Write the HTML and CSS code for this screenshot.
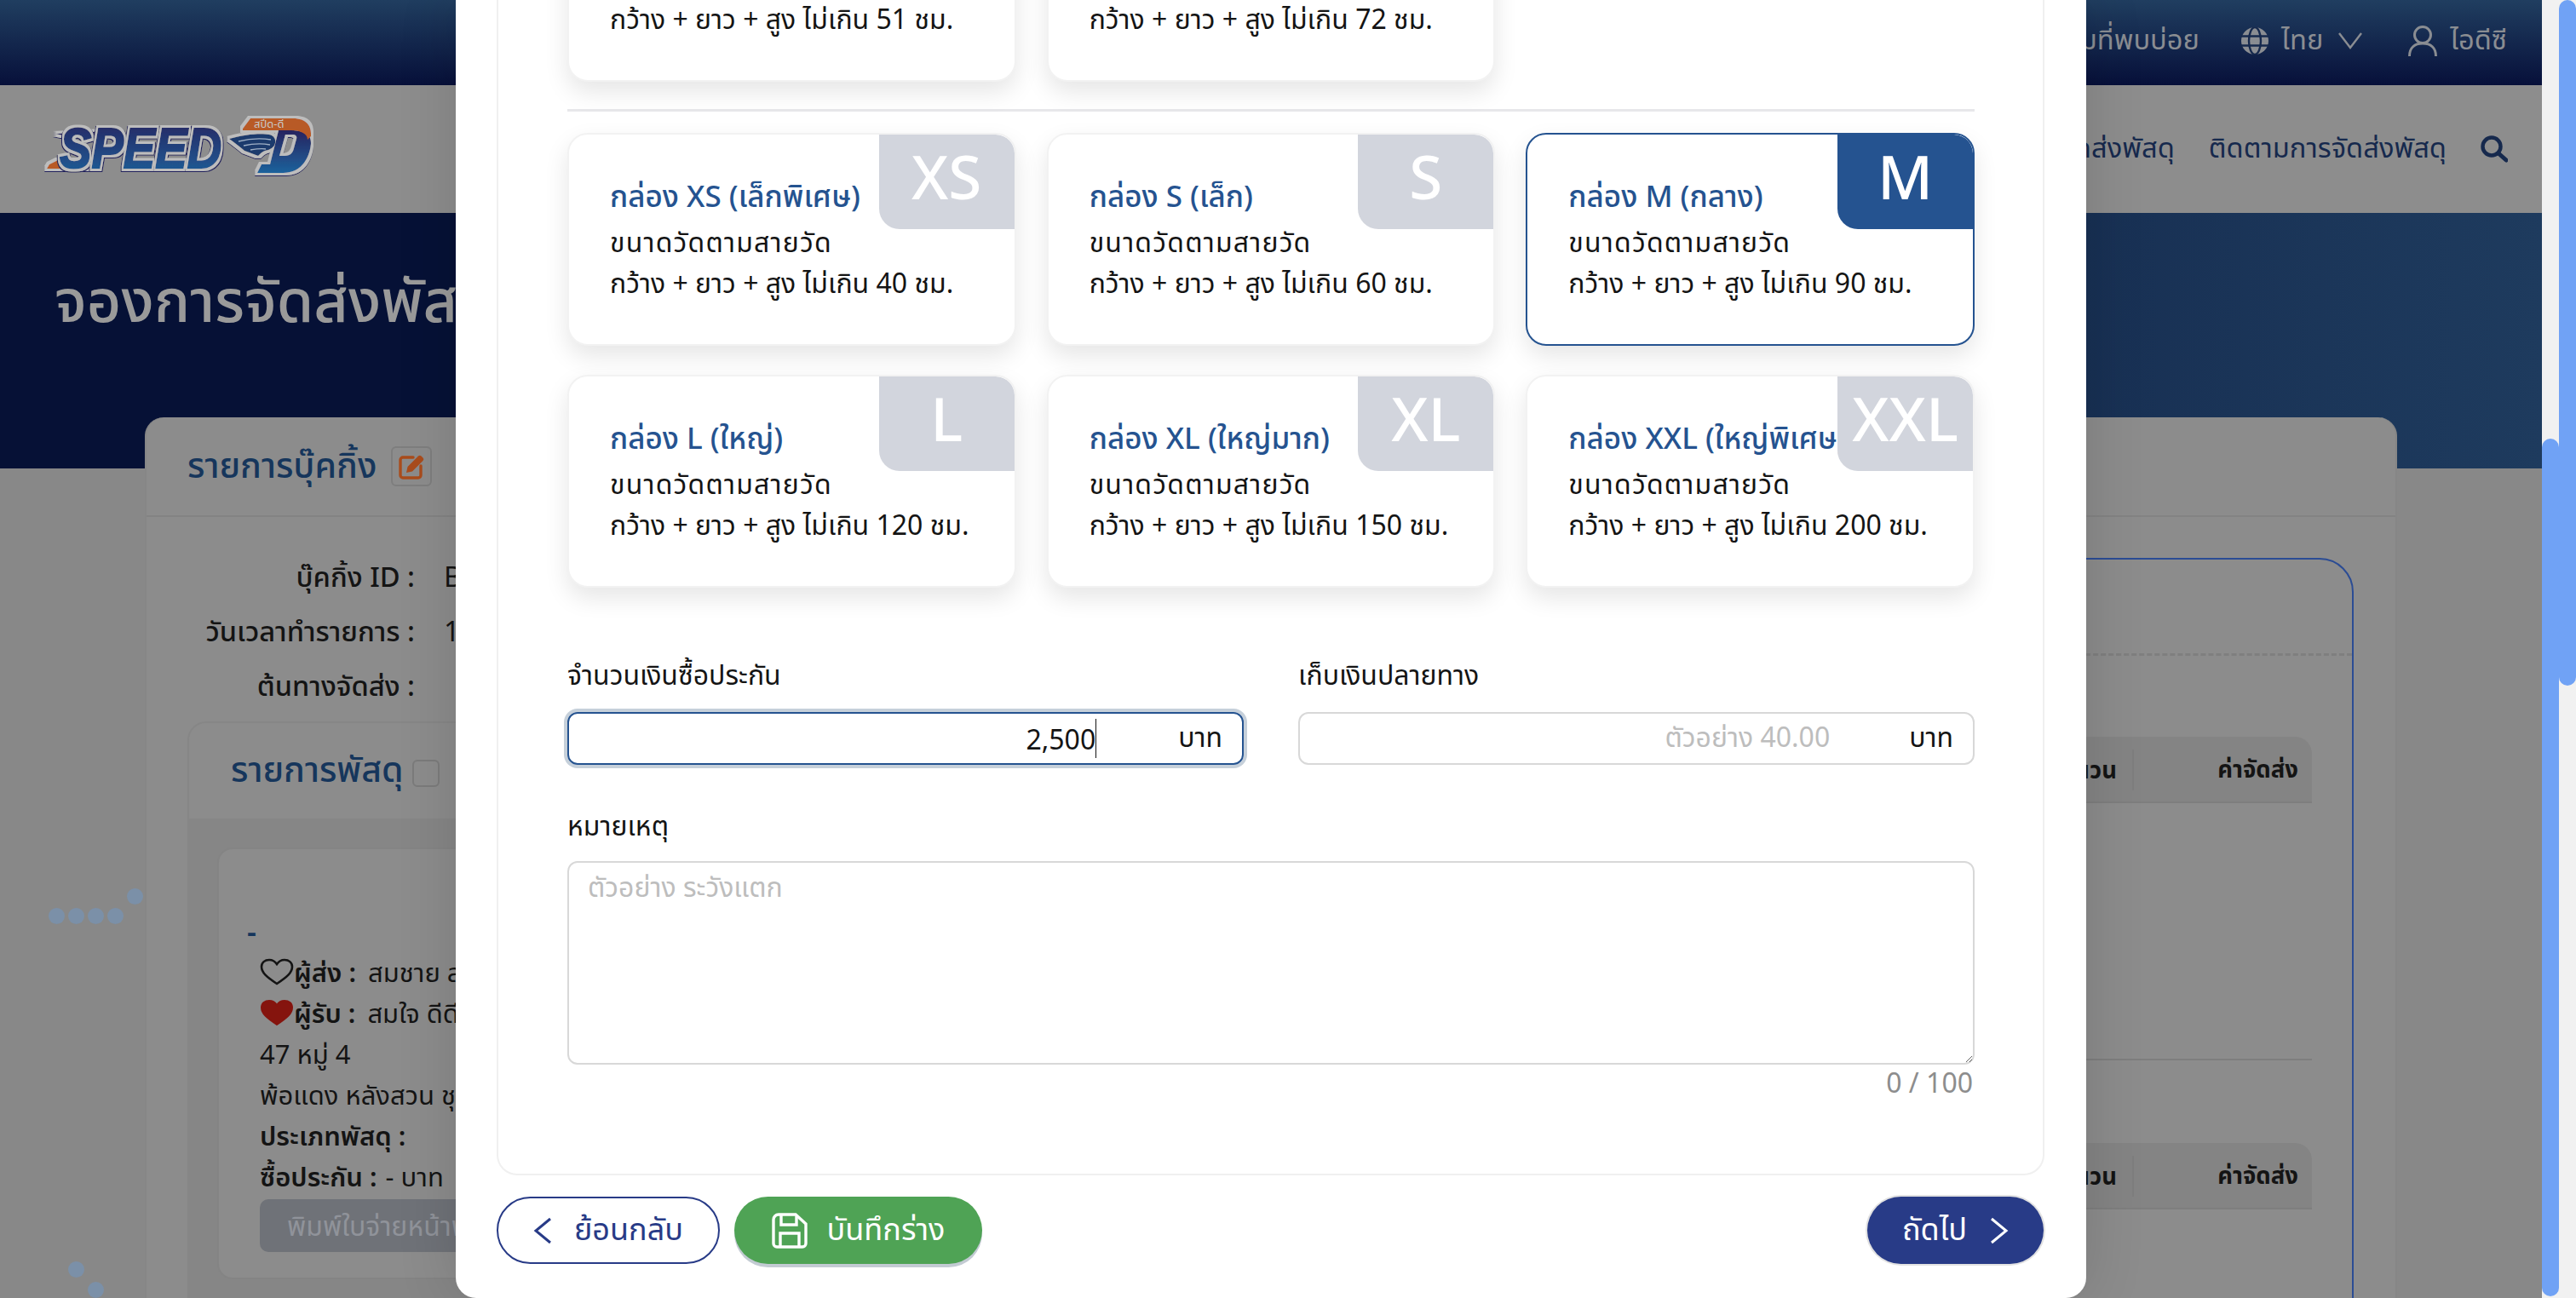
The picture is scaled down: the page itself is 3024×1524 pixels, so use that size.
FILE: index.html
```html
<!DOCTYPE html>
<html lang="th">
<head>
<meta charset="utf-8">
<title>จองการจัดส่งพัสดุ</title>
<link rel="stylesheet" href="styles.css">
</head>
<body>
<div class="viewport">
  <div class="page">
    <header class="topbar">
      <span class="top-link">คำถามที่พบบ่อย</span>
      <span class="top-item">
        <svg class="ic-globe" viewBox="0 0 32 32"><circle cx="16" cy="16" r="16" fill="#8a8d92"/><g stroke="#16294d" stroke-width="2.4" fill="none"><ellipse cx="16" cy="16" rx="7" ry="16"/><path d="M0 10.5h32M0 21.5h32"/></g></svg>
        <span>ไทย</span>
        <svg class="ic-chev" viewBox="0 0 28 20"><path d="M1 1l13 17L27 1" fill="none" stroke="#8a8d92" stroke-width="2.4"/></svg>
      </span>
      <span class="top-item user">
        <svg class="ic-user" viewBox="0 0 34 36"><circle cx="17" cy="11" r="9.5" fill="none" stroke="#8a8d92" stroke-width="3"/><path d="M1.5 36c0-10 6-15 15.500-15s15.500 5 15.500 15" fill="none" stroke="#8a8d92" stroke-width="3"/></svg>
        <span>ไอดีซี</span>
      </span>
    </header>

    <nav class="navbar">
      <svg class="logo" viewBox="0 0 320 80" aria-label="Speed D">
        <defs>
          <linearGradient id="lg" x1="0" y1="0" x2="0" y2="1"><stop offset="0" stop-color="#27235f"/><stop offset="1" stop-color="#1d629c"/></linearGradient>
          <filter id="outline" x="-10%" y="-20%" width="120%" height="140%">
            <feMorphology in="SourceAlpha" operator="dilate" radius="3.2" result="fat"/>
            <feOffset in="fat" dy="1" result="fatLow"/>
            <feFlood flood-color="#22225c"/><feComposite in2="fatLow" operator="in" result="dark"/>
            <feMorphology in="SourceAlpha" operator="dilate" radius="2.6" result="mid"/>
            <feFlood flood-color="#bdbdbd"/><feComposite in2="mid" operator="in" result="light"/>
            <feMerge><feMergeNode in="dark"/><feMergeNode in="light"/><feMergeNode in="SourceGraphic"/></feMerge>
          </filter>
        </defs>
        <g filter="url(#outline)">
          <path d="M10 57l10-5h35c6 0 9-3 10-6l-4 12c-2 3-5 4-9 4H7z" fill="#b85a28"/>
          <path d="M17 21l60-3-2 5H26z" fill="#27235f"/>
          <path d="M271 17h23c15 0 24 5 23 16-2 20-14 34-32 34h-31l5-10h10l10-40zm16 5l-7 25h6c7 0 10-4 11-9l3-11c1-3-1-5-5-5z" fill="url(#lg)" fill-rule="evenodd"/>
          <path d="M237 15l9-12h50c16 0 22 9 21 21l-4 4c0-7-8-11-19-11h-57z" fill="#b85a28"/>
          <path d="M221 27c18-5 36-7 47-5 6 1 8 6 7 10-1 5-6 8-12 9-3 1-5 3-8 6l-16-6c-6-5-12-10-18-14z" fill="#1e3a6d"/>
        </g>
        <path d="M232 30c12-3 26-4 38-2M238 35c9-2 20-3 31-1M246 40c6-1 13-2 18-1" stroke="#9fb0c6" stroke-width="1.3" fill="none"/>
        <text class="logo-word" transform="translate(22 61) scale(.85 1)">SPEED</text>
        <text class="logo-thai" x="250" y="14">สปีด-ดี</text>
      </svg>
      <span class="nav-links">
        <span>จองการจัดส่งพัสดุ</span>
        <span>ติดตามการจัดส่งพัสดุ</span>
        <svg class="ic-search" viewBox="0 0 32 32"><circle cx="13" cy="13" r="10.500" fill="none" stroke="#16294d" stroke-width="4.400"/><path d="M21 21l9 8" stroke="#16294d" stroke-width="5" stroke-linecap="round"/></svg>
      </span>
    </nav>

    <section class="hero"><h1>จองการจัดส่งพัสดุ</h1></section>

    <main class="booking">
      <div class="booking-head">
        <h2>รายการบุ๊คกิ้ง</h2>
        <span class="edit-box">
          <svg viewBox="0 0 32 32"><path d="M18 5H6a3 3 0 0 0-3 3v18a3 3 0 0 0 3 3h18a3 3 0 0 0 3-3V15" fill="none" stroke="#a94c1c" stroke-width="3.400" stroke-linecap="round"/><path d="M10 23l1.500-7L24 3.500a2.500 2.500 0 0 1 3.500 0l2 2a2.500 2.500 0 0 1 0 3.500L17 21.500z" fill="#a94c1c"/></svg>
        </span>
      </div>
      <div class="booking-body">
        <div class="booking-left">
          <dl class="meta">
            <dt>บุ๊คกิ้ง ID :</dt><dd>BK6701000123</dd>
            <dt>วันเวลาทำรายการ :</dt><dd>12/01/2567 10:30</dd>
            <dt>ต้นทางจัดส่ง :</dt><dd></dd>
          </dl>
          <section class="parcels">
            <div class="parcels-head"><h3>รายการพัสดุ</h3><span class="check-box"></span></div>
            <div class="parcels-body">
              <article class="parcel">
                <div class="parcel-dash">-</div>
                <div class="parcel-line who">
                  <svg class="heart" viewBox="0 0 40 32"><path d="M20 30C8 22 2 17 2 10 2 5 6 2 11 2c4 0 7 2 9 5 2-3 5-5 9-5 5 0 9 3 9 8 0 7-6 12-18 20z" fill="none" stroke="#141414" stroke-width="2.600"/></svg>
                  <b>ผู้ส่ง :</b><span>สมชาย สมบูรณ์</span>
                </div>
                <div class="parcel-line who">
                  <svg class="heart" viewBox="0 0 40 32"><path d="M20 30C8 22 2 17 2 10 2 5 6 2 11 2c4 0 7 2 9 5 2-3 5-5 9-5 5 0 9 3 9 8 0 7-6 12-18 20z" fill="#85140e" stroke="#85140e" stroke-width="2"/></svg>
                  <b>ผู้รับ :</b><span>สมใจ ดีดี</span>
                </div>
                <div class="parcel-line">47 หมู่ 4</div>
                <div class="parcel-line">พ้อแดง หลังสวน ชุมพร</div>
                <div class="parcel-line"><b>ประเภทพัสดุ :</b></div>
                <div class="parcel-line"><b>ซื้อประกัน :</b> - บาท</div>
                <div class="print-btn">พิมพ์ใบจ่ายหน้าพัสดุ</div>
              </article>
            </div>
          </section>
        </div>
        <aside class="summary">
          <div class="summary-head"></div>
          <div class="table-head"><span class="th-qty">จำนวน</span><span class="th-fee">ค่าจัดส่ง</span></div>
          <div class="table-row"></div>
          <div class="table-head second"><span class="th-qty">จำนวน</span><span class="th-fee">ค่าจัดส่ง</span></div>
        </aside>
      </div>
    </main>

    <div class="dots">
      <i class="d1"></i><i class="d2"></i><i class="d3"></i><i class="d4"></i><i class="d5"></i><i class="d6"></i><i class="d7"></i>
    </div>

    <div class="modal">
      <div class="modal-panel">
        <div class="size-grid first">
          <div class="box"><p class="box-line">กว้าง + ยาว + สูง ไม่เกิน 51 ชม.</p></div>
          <div class="box"><p class="box-line">กว้าง + ยาว + สูง ไม่เกิน 72 ชม.</p></div>
        </div>
        <hr class="divider">
        <div class="size-grid">
          <div class="box"><span class="badge">XS</span><h4>กล่อง XS (เล็กพิเศษ)</h4><p>ขนาดวัดตามสายวัด</p><p>กว้าง + ยาว + สูง ไม่เกิน 40 ชม.</p></div>
          <div class="box"><span class="badge">S</span><h4>กล่อง S (เล็ก)</h4><p>ขนาดวัดตามสายวัด</p><p>กว้าง + ยาว + สูง ไม่เกิน 60 ชม.</p></div>
          <div class="box selected"><span class="badge">M</span><h4>กล่อง M (กลาง)</h4><p>ขนาดวัดตามสายวัด</p><p>กว้าง + ยาว + สูง ไม่เกิน 90 ชม.</p></div>
          <div class="box"><span class="badge">L</span><h4>กล่อง L (ใหญ่)</h4><p>ขนาดวัดตามสายวัด</p><p>กว้าง + ยาว + สูง ไม่เกิน 120 ชม.</p></div>
          <div class="box"><span class="badge">XL</span><h4>กล่อง XL (ใหญ่มาก)</h4><p>ขนาดวัดตามสายวัด</p><p>กว้าง + ยาว + สูง ไม่เกิน 150 ชม.</p></div>
          <div class="box"><span class="badge">XXL</span><h4>กล่อง XXL (ใหญ่พิเศษ)</h4><p>ขนาดวัดตามสายวัด</p><p>กว้าง + ยาว + สูง ไม่เกิน 200 ชม.</p></div>
        </div>
        <div class="fields">
          <div class="field">
            <label>จำนวนเงินซื้อประกัน</label>
            <div class="input focused"><span class="val">2,500</span><span class="caret"></span><span class="unit">บาท</span></div>
          </div>
          <div class="field">
            <label>เก็บเงินปลายทาง</label>
            <div class="input"><span class="ph">ตัวอย่าง 40.00</span><span class="unit">บาท</span></div>
          </div>
        </div>
        <div class="note">
          <label>หมายเหตุ</label>
          <textarea placeholder="ตัวอย่าง ระวังแตก"></textarea>
          <div class="count">0 / 100</div>
        </div>
      </div>
      <footer class="modal-foot">
        <div class="foot-left">
          <button class="btn back"><svg class="chev" viewBox="0 0 22 32"><path d="M20 2L3 16l17 14" fill="none" stroke="currentColor" stroke-width="3"/></svg>ย้อนกลับ</button>
          <button class="btn save"><svg class="floppy" viewBox="0 0 42 42"><path d="M8 2h20l12 11v23a4 4 0 0 1-4 4H6a4 4 0 0 1-4-4V8a6 6 0 0 1 6-6z" fill="none" stroke="#fff" stroke-width="3.400"/><path d="M11 2v12h18V4M10 40V24h22v16" fill="none" stroke="#fff" stroke-width="3.400"/></svg>บันทึกร่าง</button>
        </div>
        <button class="btn next">ถัดไป<svg class="chev" viewBox="0 0 22 32"><path d="M2 2l17 14L2 30" fill="none" stroke="currentColor" stroke-width="3"/></svg></button>
      </footer>
    </div>
  </div>
  <div class="bar bar-inner"><span class="thumb"></span></div>
  <div class="bar bar-outer"><span class="thumb"></span></div>
</div>
</body>
</html>
```
FILE: styles.css
```css
* { box-sizing: border-box; }
html, body { margin: 0; height: 100%; overflow: hidden; }
body { font-family: "Noto Sans", "Noto Sans Thai", "Noto Sans CJK SC", sans-serif; color: #141414; background: #f1f1f1; }
h1, h2, h3, h4, p, dl, dd, dt { margin: 0; font-weight: inherit; }

.viewport { display: flex; width: 3024px; height: 1524px; }
.page { position: relative; width: 2984px; height: 1524px; overflow: hidden; background: #888; }

/* scrollbars */
.bar { position: relative; width: 20px; background: #f1f1f1; }
.thumb { position: absolute; left: 0; width: 20px; background: #70a2f5; border-radius: 10px; }
.bar-inner .thumb { top: 515px; bottom: 2px; }
.bar-outer .thumb { top: 0; height: 805px; }

/* top bar */
.topbar { height: 100px; display: flex; align-items: center; justify-content: flex-end; padding: 0 41px 4px 0; gap: 49px; font-size: 32.7px; color: #8a8d92; background: linear-gradient(#203e60, #07103a); }
.top-item { display: flex; align-items: center; gap: 15px; }
.top-item.user { gap: 15px; margin-left: 5px; }
.ic-globe { width: 32px; height: 32px; }
.ic-chev { width: 28px; height: 20px; margin-left: 3px; }
.ic-user { width: 34px; height: 36px; }

/* nav */
.navbar { height: 150px; display: flex; align-items: center; justify-content: space-between; padding: 0 40px 0 48px; background: #8d8d8d; }
.logo { width: 320px; height: 80px; margin-top: 2px; }
.logo-word { font: italic 700 66px "Liberation Sans", sans-serif; fill: url(#lg); stroke: url(#lg); stroke-width: 2px; filter: url(#outline); }
.logo-thai { font-size: 13px; fill: #c9c9c9; }
.nav-links { display: flex; align-items: center; gap: 40px; font-size: 32.7px; color: #16294d; }
.ic-search { width: 32px; height: 32px; }

/* hero */
.hero { height: 300px; padding: 56px 64px 0; background: linear-gradient(90deg, #061136 0%, #061136 30%, #1e3b5e 100%); }
.hero h1 { font-size: 70px; font-weight: 500; line-height: 90px; color: #9a9a9a; white-space: nowrap; }

/* booking card behind the dialog */
.booking { width: 2644px; margin: -60px 0 0 170px; background: #8c8c8c; border: 2px solid #868686; border-top: 0; border-radius: 22px 22px 0 0; }
.booking-head { height: 117px; display: flex; align-items: center; gap: 17px; padding: 0 0 0 48px; border-bottom: 2px solid #838383; }
.booking-head h2 { font-size: 41px; font-weight: 500; color: #16365c; }
.edit-box { display: flex; align-items: center; justify-content: center; width: 48px; height: 47px; border: 2px solid #7e7e7e; border-radius: 6px; }
.edit-box svg { width: 32px; height: 32px; }
.booking-body { display: flex; justify-content: space-between; padding: 0 49px 0 48px; }
.booking-left { width: 1100px; }
.meta { display: grid; grid-template-columns: 267px 1fr; column-gap: 34px; row-gap: 0; margin-top: 38px; font-size: 32.7px; line-height: 64px; }
.meta dt { text-align: right; font-weight: 500; }
.parcels { margin-top: 10px; border: 2px solid #868686; border-radius: 22px 22px 0 0; }
.parcels-head { height: 112px; display: flex; align-items: center; gap: 10px; padding-left: 49px; }
.parcels-head h3 { font-size: 41px; font-weight: 500; color: #16365c; }
.check-box { width: 32px; height: 32px; border: 2px solid #7b7b7b; border-radius: 6px; margin-top: 6px; }
.parcels-body { background: #868686; padding: 34px 33px 100px; }
.parcel { height: 507px; padding: 72px 48px 0; border: 2px solid #848484; border-radius: 18px; background: #8c8c8c; }
.parcel-dash { margin-left: -15px; height: 48px; font-size: 34px; line-height: 48px; font-weight: 600; color: #16365c; }
.parcel-line { height: 48px; line-height: 48px; font-size: 31px; white-space: nowrap; display: flex; align-items: center; gap: 10px; }
.parcel-line b { font-weight: 600; }
.who { gap: 14px; }
.who b { margin-left: -14px; }
.heart { width: 40px; height: 32px; }
.print-btn { margin-top: 3px; height: 62px; width: 500px; padding-left: 32px; line-height: 62px; font-size: 32px; color: #90939a; background: #6f7278; border-radius: 10px; }

.summary { width: 1310px; height: 1100px; margin-top: 48px; padding: 0 47px; border: 2px solid #2b4c94; border-radius: 40px 40px 0 0; }
.summary-head { height: 113px; margin: 0 -47px; border-bottom: 3px dashed #7f7f7f; }
.table-head { height: 78px; margin-top: 95px; padding-top: 2px; display: flex; align-items: center; justify-content: flex-end; background: #848484; border-bottom: 2px solid #7e7e7e; border-radius: 0 20px 0 0; font-size: 27.5px; font-weight: 700; }
.table-head.second { margin-top: 97px; }
.th-qty { padding-right: 18px; border-right: 2px solid #7e7e7e; line-height: 48px; }
.th-fee { width: 209px; padding-right: 16px; text-align: right; }
.table-row { height: 302px; border-bottom: 2px solid #7e7e7e; }

/* loader dots */
.dots i { position: absolute; width: 19px; height: 19px; border-radius: 50%; background: #7b90a8; }
.d1 { left: 57px; top: 1066px; } .d2 { left: 80px; top: 1066px; } .d3 { left: 103px; top: 1066px; }
.d4 { left: 126px; top: 1066px; } .d5 { left: 149px; top: 1043px; }
.d6 { left: 80px; top: 1481px; } .d7 { left: 103px; top: 1505px; }

/* dialog */
.modal { position: absolute; left: 535px; top: 0; width: 1914px; height: 1524px; display: flex; flex-direction: column; justify-content: flex-end; padding: 0 49px 40px 48px; overflow: hidden; background: #fff; border-radius: 0 0 24px 24px; box-shadow: 0 0 70px rgba(0, 0, 0, .14); }
.modal-panel { flex: none; padding: 0 80px 85px 81px; border: 2px solid #f0f0f0; border-top: 0; border-radius: 0 0 24px 24px; }
.size-grid { display: grid; grid-template-columns: repeat(3, 1fr); gap: 34px 36px; }
.box { position: relative; height: 250px; padding: 42px 48px 0; overflow: hidden; background: #fff; border: 2px solid #f2f2f2; border-radius: 24px; box-shadow: 0 12px 28px rgba(0, 0, 0, .1); font-size: 32px; line-height: 48px; white-space: nowrap; }
.box.selected { border-color: #255390; }
.size-grid.first .box { padding-top: 150px; }
.box h4 { height: 60px; line-height: 60px; font-size: 35px; font-weight: 500; color: #255390; }
.box h4 + p { letter-spacing: 1.2px; }
.badge { position: absolute; top: 0; right: 0; width: 159px; height: 111px; display: flex; align-items: center; justify-content: center; padding-bottom: 14px; font-size: 71px; font-weight: 500; color: #fff; background: #d2d5dd; border-radius: 0 22px 0 24px; }
.selected .badge { background: #255390; }
.divider { margin: 32px 0 25px; height: 3px; border: 0; background: #e7e7ea; }

.fields { display: grid; grid-template-columns: 794px 794px; gap: 64px; margin-top: 81px; }
.field label, .note label { display: block; height: 42px; font-size: 32px; line-height: 42px; }
.input { height: 62px; margin-top: 23px; display: flex; align-items: center; justify-content: flex-end; padding: 0 23px; border: 2px solid #d8d8d8; border-radius: 12px; font-size: 32px; }
.input.focused { border-color: #255390; box-shadow: 0 0 0 4px #c6d0da; }
.caret { width: 1px; height: 46px; margin-right: 96px; background: #141414; }
.ph { color: #bdbdbd; margin-right: 93px; }
.note { margin-top: 50px; }
.note textarea { display: block; width: 100%; height: 239px; margin-top: 21px; padding: 8px 22px; resize: vertical; font: 32px/40px "Noto Sans", "Noto Sans Thai", sans-serif; color: #141414; background: #fff; border: 2px solid #d8d8d8; border-radius: 12px; outline: 0; }
.note textarea::placeholder { color: #bdbdbd; opacity: 1; }
.count { margin-top: 1px; text-align: right; font-size: 32px; line-height: 40px; padding: 0 2px 2px 0; color: #8d8d8d; }

.modal-foot { flex: none; display: flex; align-items: center; justify-content: space-between; margin: 25px 1px 0 0; }
.foot-left { display: flex; gap: 17px; }
.btn { display: flex; align-items: center; justify-content: center; height: 79px; border: 0; border-radius: 40px; font: 36px "Noto Sans", "Noto Sans Thai", sans-serif; }
.chev { width: 22px; height: 32px; }
.back { width: 262px; gap: 26px; color: #283b87; background: #fff; border: 2px solid #283b87; }
.save { width: 291px; gap: 23px; color: #fff; background: #4fa355; box-shadow: 0 4px 0 #c3cbd3; }
.floppy { width: 42px; height: 42px; }
.next { width: 207px; gap: 27px; color: #fff; background: #283b87; box-shadow: 0 0 0 2px #e2e2e2; }
```
